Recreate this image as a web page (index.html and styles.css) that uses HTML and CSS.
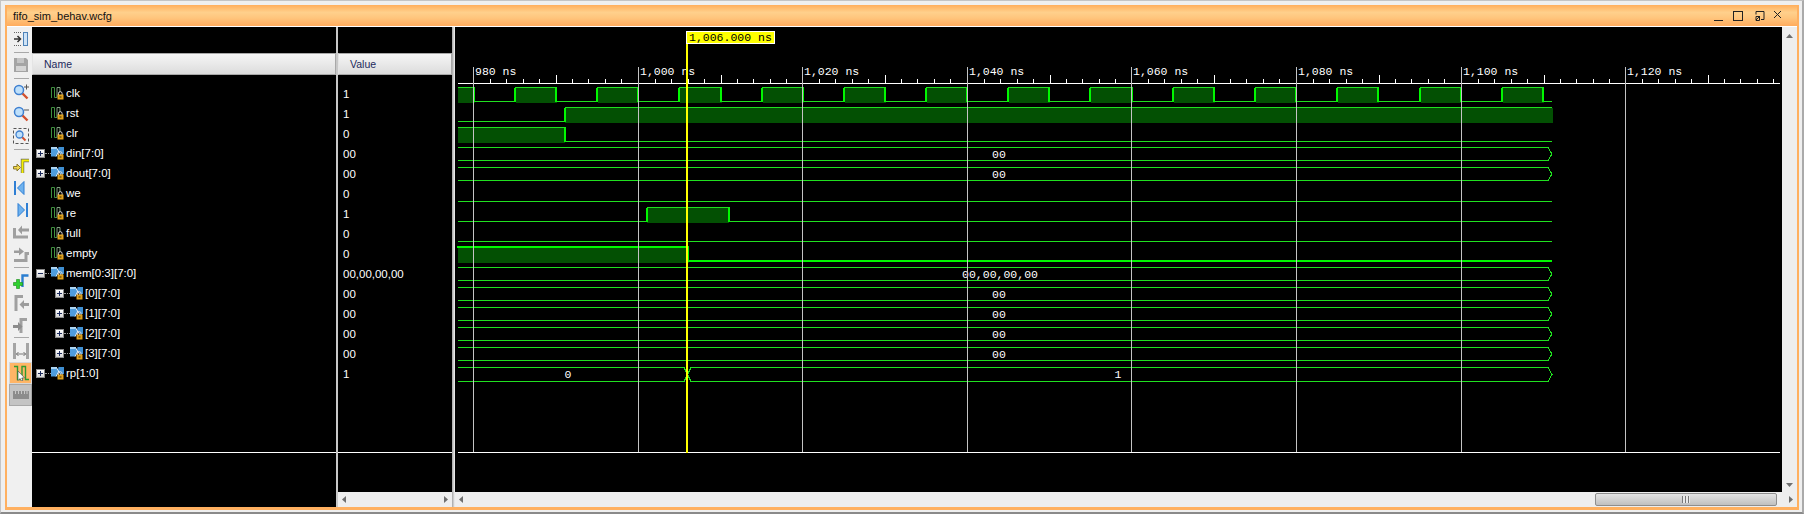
FILE: index.html
```html
<!DOCTYPE html>
<html lang="en">
<head>
  <meta charset="UTF-8">
  <title>fifo_sim_behav.wcfg</title>
  <link rel="stylesheet" href="styles.css">
</head>
<body>

  <svg class="icon-defs" width="0" height="0">
    <defs>
      <symbol id="i-step-in" viewBox="0 0 16 16">
        <path d="M1 1.500h8M1 14.500h8" stroke="#666" stroke-dasharray="1 1" fill="none"/>
        <path d="M1 8h6M4.500 5l3 3-3 3" stroke="#333" stroke-width="1.500" fill="none"/>
        <rect x="10.500" y="1.500" width="4" height="13" fill="#cfe3f6" stroke="#4f83b8"/>
      </symbol>
      <symbol id="i-save" viewBox="0 0 16 16">
        <path d="M1 1h12l2 2v12H1z" fill="#a4a4a4"/>
        <rect x="4" y="1" width="7" height="5" fill="#c4c4c4"/>
        <rect x="3" y="9" width="10" height="5" fill="#d4d4d4"/>
      </symbol>
      <symbol id="i-zoom-in" viewBox="0 0 16 16">
        <path d="M9 9l5.500 5.500" stroke="#d2502e" stroke-width="2.400"/>
        <circle cx="6" cy="6" r="4.500" fill="#bfe0fa" stroke="#3d7fd0" stroke-width="1.500"/>
        <path d="M11 3h5M13.500 .5v5" stroke="#555"/>
      </symbol>
      <symbol id="i-zoom-out" viewBox="0 0 16 16">
        <path d="M9 9l5.500 5.500" stroke="#d2502e" stroke-width="2.400"/>
        <circle cx="6" cy="6" r="4.500" fill="#bfe0fa" stroke="#3d7fd0" stroke-width="1.500"/>
        <path d="M11 4h5" stroke="#555"/>
      </symbol>
      <symbol id="i-zoom-fit" viewBox="0 0 16 16">
        <rect x=".5" y=".5" width="15" height="15" fill="none" stroke="#555" stroke-dasharray="3 2"/>
        <path d="M8.500 8.500l4 4" stroke="#d2502e" stroke-width="2"/>
        <circle cx="6.500" cy="6.500" r="3.500" fill="#bfe0fa" stroke="#3d7fd0" stroke-width="1.300"/>
      </symbol>
      <symbol id="i-goto" viewBox="0 0 16 16">
        <path d="M9.500 15V2.500H16" stroke="#666" stroke-width="3.400" fill="none"/>
        <path d="M9.500 15V2.500H16" stroke="#f6f000" stroke-width="2" fill="none"/>
        <path d="M.5 8.500h3.500V6l3.500 3.500L4 13v-2H.5z" fill="#f2d84a" stroke="#8a7a30"/>
      </symbol>
      <symbol id="i-prev" viewBox="0 0 16 16">
        <rect x="1" y="1" width="2" height="14" fill="#2f7fd4"/>
        <path d="M11 1.500v13L4.500 8z" fill="#6fb2ee" stroke="#2f7fd4"/>
      </symbol>
      <symbol id="i-next" viewBox="0 0 16 16">
        <rect x="13" y="1" width="2" height="14" fill="#2f7fd4"/>
        <path d="M5 1.500v13L11.500 8z" fill="#6fb2ee" stroke="#2f7fd4"/>
      </symbol>
      <symbol id="i-swap-left" viewBox="0 0 16 16">
        <path d="M1.500 4v9H15" stroke="#a0a0a0" stroke-width="3" fill="none"/>
        <path d="M16 7.500H9V10.500L5 6l4-4.500V4.500h7z" fill="#9c9c9c"/>
      </symbol>
      <symbol id="i-swap-right" viewBox="0 0 16 16">
        <path d="M1 14.500h12V7.500h3" stroke="#a0a0a0" stroke-width="3" fill="none"/>
        <path d="M1 4.500h5V1.500l5 4-5 4V7H1z" fill="#9c9c9c"/>
      </symbol>
      <symbol id="i-add" viewBox="0 0 16 16">
        <path d="M9.500 14V2.500H15.500" stroke="#2b7ed0" stroke-width="2.400" fill="none"/>
        <path d="M3.500 6.500h3v3h3v3h-3v3h-3v-3h-3v-3h3z" fill="#2fd02f" stroke="#158a15" stroke-width=".6"/>
      </symbol>
      <symbol id="i-marker-left" viewBox="0 0 16 16">
        <path d="M3 16V1.500h7" stroke="#a0a0a0" stroke-width="3" fill="none"/>
        <path d="M16 8H11V5L6.500 9.500 11 14v-3h5z" fill="#9c9c9c"/>
      </symbol>
      <symbol id="i-marker-right" viewBox="0 0 16 16">
        <path d="M8 16V2.500h6" stroke="#a0a0a0" stroke-width="3" fill="none"/>
        <path d="M0 8h5V5l4.500 4.500L5 14v-3H0z" fill="#8c8c8c"/>
      </symbol>
      <symbol id="i-measure" viewBox="0 0 16 16">
        <rect x="0" y="0" width="3" height="16" fill="#a4a4a4"/>
        <rect x="13" y="0" width="3" height="16" fill="#a4a4a4"/>
        <path d="M3 11h10M5.500 9l-2 2 2 2M10.500 9l2 2-2 2" stroke="#777" fill="none"/>
      </symbol>
      <symbol id="i-snap" viewBox="0 0 16 16">
        <path d="M1 1.500h3.500v13H9V1.500h3.500v13H16" stroke="#2f9a2f" stroke-width="1.400" fill="none"/>
        <path d="M5 6v9.500l2-2 1.500 2.500 1.500-.8L8.700 13l2.800-.2z" fill="#fff" stroke="#555" stroke-width=".7"/>
      </symbol>
      <symbol id="i-ruler" viewBox="0 0 16 16">
        <rect x="0" y="4" width="16" height="8" fill="#8c8c8c"/>
        <path d="M2.500 4v3M5.500 4v3M8.500 4v3M11.500 4v3M14 4v3" stroke="#c8c8c8"/>
      </symbol>

      <symbol id="i-signal" viewBox="0 0 13 14">
        <path d="M.5 12V1.500H3.500V11.500H6" stroke="#3f8f3f" fill="none"/>
        <path d="M6 11.500V1.500H9V6" stroke="#7fa07f" fill="none"/>
        <path d="M7.500 9V7.500a1.800 1.800 0 0 1 3.600 0V9" stroke="#dddddd" fill="none"/>
        <rect x="6.500" y="8.500" width="6" height="5" fill="#dfa21f"/>
        <rect x="8.500" y="10" width="2" height="2" fill="#8a6410"/>
      </symbol>
      <symbol id="i-bus" viewBox="0 0 13 14">
        <path d="M0 1h5.500L8 5.500 5.500 10.500H0z" fill="#4f9ddc"/>
        <path d="M0 1h5v2H0z" fill="#a9d4f4"/>
        <path d="M7.500 1H13V8H9.500L7 4.500z" fill="#3f8fd2"/>
        <path d="M5 1l5 8M5 10.500L8 5" stroke="#f0f8ff" stroke-width=".9"/>
        <path d="M7.500 9V7.500a1.800 1.800 0 0 1 3.600 0V9" stroke="#dddddd" fill="none"/>
        <rect x="6.500" y="8.500" width="6" height="5" fill="#dfa21f"/>
        <rect x="8.500" y="10" width="2" height="2" fill="#8a6410"/>
      </symbol>
    </defs>
  </svg>

  <div class="frame">
    <div class="window">

      <div class="titlebar">
        <span class="title-text">fifo_sim_behav.wcfg</span>
        <svg class="title-controls" width="68" height="12" viewBox="0 0 68 12">
          <path d="M0 10.500h9" stroke="#222"/>
          <rect x="19.500" y="1.500" width="9" height="9" fill="none" stroke="#222"/>
          <path d="M42 4.500V1.500h8v8h-3M42 10l4-4M42 6.500h3.500v4H42z" fill="none" stroke="#222"/>
          <path d="M60 1l7 7M67 1l-7 7" stroke="#222"/>
        </svg>
      </div>

      <div class="content">

        <div class="toolbar">
          <div class="tool-btn"><svg class="tool-icon"><use href="#i-step-in"/></svg></div>
          <div class="tool-sep tool-sep-first"></div>
          <div class="tool-btn"><svg class="tool-icon"><use href="#i-save"/></svg></div>
          <div class="tool-sep"></div>
          <div class="tool-btn"><svg class="tool-icon"><use href="#i-zoom-in"/></svg></div>
          <div class="tool-btn"><svg class="tool-icon"><use href="#i-zoom-out"/></svg></div>
          <div class="tool-btn"><svg class="tool-icon"><use href="#i-zoom-fit"/></svg></div>
          <div class="tool-sep tool-sep-wide"></div>
          <div class="tool-btn"><svg class="tool-icon"><use href="#i-goto"/></svg></div>
          <div class="tool-btn"><svg class="tool-icon"><use href="#i-prev"/></svg></div>
          <div class="tool-btn"><svg class="tool-icon"><use href="#i-next"/></svg></div>
          <div class="tool-btn"><svg class="tool-icon"><use href="#i-swap-left"/></svg></div>
          <div class="tool-btn"><svg class="tool-icon"><use href="#i-swap-right"/></svg></div>
          <div class="tool-sep"></div>
          <div class="tool-btn"><svg class="tool-icon"><use href="#i-add"/></svg></div>
          <div class="tool-btn"><svg class="tool-icon"><use href="#i-marker-left"/></svg></div>
          <div class="tool-btn"><svg class="tool-icon"><use href="#i-marker-right"/></svg></div>
          <div class="tool-sep tool-sep-last"></div>
          <div class="tool-btn"><svg class="tool-icon"><use href="#i-measure"/></svg></div>
          <div class="tool-btn tool-btn-active"><svg class="tool-icon"><use href="#i-snap"/></svg></div>
          <div class="tool-btn tool-btn-off"><svg class="tool-icon"><use href="#i-ruler"/></svg></div>
        </div>

        <div class="column name-column">
          <div class="column-top"></div>
          <div class="column-header">Name</div>
          <div class="rows">
            <div class="row"><svg class="sig-icon"><use href="#i-signal"/></svg><span>clk</span></div>
            <div class="row"><svg class="sig-icon"><use href="#i-signal"/></svg><span>rst</span></div>
            <div class="row"><svg class="sig-icon"><use href="#i-signal"/></svg><span>clr</span></div>
            <div class="row row-bus"><i class="expander"></i><i class="dots"></i><svg class="sig-icon"><use href="#i-bus"/></svg><span>din[7:0]</span></div>
            <div class="row row-bus"><i class="expander"></i><i class="dots"></i><svg class="sig-icon"><use href="#i-bus"/></svg><span>dout[7:0]</span></div>
            <div class="row"><svg class="sig-icon"><use href="#i-signal"/></svg><span>we</span></div>
            <div class="row"><svg class="sig-icon"><use href="#i-signal"/></svg><span>re</span></div>
            <div class="row"><svg class="sig-icon"><use href="#i-signal"/></svg><span>full</span></div>
            <div class="row"><svg class="sig-icon"><use href="#i-signal"/></svg><span>empty</span></div>
            <div class="row row-bus"><i class="expander expander-open"></i><i class="dots"></i><svg class="sig-icon"><use href="#i-bus"/></svg><span>mem[0:3][7:0]</span></div>
            <div class="row row-bus row-child"><i class="expander"></i><i class="dots"></i><svg class="sig-icon"><use href="#i-bus"/></svg><span>[0][7:0]</span></div>
            <div class="row row-bus row-child"><i class="expander"></i><i class="dots"></i><svg class="sig-icon"><use href="#i-bus"/></svg><span>[1][7:0]</span></div>
            <div class="row row-bus row-child"><i class="expander"></i><i class="dots"></i><svg class="sig-icon"><use href="#i-bus"/></svg><span>[2][7:0]</span></div>
            <div class="row row-bus row-child"><i class="expander"></i><i class="dots"></i><svg class="sig-icon"><use href="#i-bus"/></svg><span>[3][7:0]</span></div>
            <div class="row row-bus"><i class="expander"></i><i class="dots"></i><svg class="sig-icon"><use href="#i-bus"/></svg><span>rp[1:0]</span></div>
          </div>
          <div class="column-footer"></div>
        </div>

        <div class="divider"></div>

        <div class="column value-column">
          <div class="column-top"></div>
          <div class="column-header">Value</div>
          <div class="rows">
            <div class="row">1</div>
            <div class="row">1</div>
            <div class="row">0</div>
            <div class="row">00</div>
            <div class="row">00</div>
            <div class="row">0</div>
            <div class="row">1</div>
            <div class="row">0</div>
            <div class="row">0</div>
            <div class="row">00,00,00,00</div>
            <div class="row">00</div>
            <div class="row">00</div>
            <div class="row">00</div>
            <div class="row">00</div>
            <div class="row">1</div>
          </div>
          <div class="column-footer">
            <div class="hscroll">
              <i class="arrow arrow-left"></i>
              <i class="arrow arrow-right"></i>
            </div>
          </div>
        </div>

        <div class="divider divider-wide"></div>

        <div class="wave-pane">
          <div class="wave-main">
            <svg class="wave" width="1327" height="465" viewBox="455 27 1327 465" shape-rendering="crispEdges">
              <defs>
                <g id="decade">
                  <path class="tick" d="M17.500 79v4M33.500 79v4M50.500 79v4M66.500 79v4M83.500 75v8M99.500 79v4M115.500 79v4M132.500 79v4M148.500 79v4"/>
                  <path class="tick-major" d="M.5 67V452"/>
                </g>
                <path id="bus" d="M458 .5H1548L1552 7L1548 13.500H458"/>
              </defs>

              <!-- filled highs -->
              <path class="high-fill" d="M458 88H475V103H458ZM516 88H557V103H516ZM598 88H639V103H598ZM680 88H722V103H680ZM763 88H804V103H763ZM845 88H886V103H845ZM927 88H968V103H927ZM1009 88H1050V103H1009ZM1091 88H1133V103H1091ZM1174 88H1215V103H1174ZM1256 88H1297V103H1256ZM1338 88H1379V103H1338ZM1421 88H1462V103H1421ZM1503 88H1544V103H1503Z"/>
              <path class="high-fill" d="M565 108H1553V123H565ZM458 128H565V143H458ZM647 208H729V223H647ZM458 248H689V263H458Z"/>

              <!-- one bit signals -->
              <g class="line">
                <path d="M458 87.500H474V101.500H515V87.500H556V101.500H597V87.500H638V101.500H679V87.500H721V101.500H762V87.500H803V101.500H844V87.500H885V101.500H926V87.500H967V101.500H1008V87.500H1049V101.500H1090V87.500H1132V101.500H1173V87.500H1214V101.500H1255V87.500H1296V101.500H1337V87.500H1378V101.500H1420V87.500H1461V101.500H1502V87.500H1543V101.500H1552"/>
                <path d="M458 121.500H565V107.500H1552"/>
                <path d="M458 127.500H565V141.500H1552"/>
                <path d="M458 201.500H1552"/>
                <path d="M458 221.500H647V207.500H729V221.500H1552"/>
                <path d="M458 241.500H1552"/>
              </g>
              <g class="edge">
                <path d="M474 88V102M515 88V102M556 88V102M597 88V102M638 88V102M679 88V102M721 88V102M762 88V102M803 88V102M844 88V102M885 88V102M926 88V102M967 88V102M1008 88V102M1049 88V102M1090 88V102M1132 88V102M1173 88V102M1214 88V102M1255 88V102M1296 88V102M1337 88V102M1378 88V102M1420 88V102M1461 88V102M1502 88V102M1543 88V102"/>
                <path d="M565 108V122M565 128V142M647 208V222M729 208V222"/>
                <path d="M457 247H688V261H1552"/>
              </g>

              <!-- buses -->
              <g class="line">
                <use href="#bus" y="147"/>
                <use href="#bus" y="167"/>
                <use href="#bus" y="267"/>
                <use href="#bus" y="287"/>
                <use href="#bus" y="307"/>
                <use href="#bus" y="327"/>
                <use href="#bus" y="347"/>
                <path d="M458 367.500H684L691 381.500H1548L1552 374.500L1548 367.500H691L684 381.500H458"/>
              </g>
              <g class="bus-text">
                <text x="999" y="158">00</text>
                <text x="999" y="178">00</text>
                <text x="1000" y="278">00,00,00,00</text>
                <text x="999" y="298">00</text>
                <text x="999" y="318">00</text>
                <text x="999" y="338">00</text>
                <text x="999" y="358">00</text>
                <text x="568" y="378">0</text>
                <text x="1118" y="378">1</text>
              </g>

              <!-- time ruler -->
              <path class="tick" d="M458 83.500H1780"/>
              <use href="#decade" x="473"/>
              <use href="#decade" x="638"/>
              <use href="#decade" x="802"/>
              <use href="#decade" x="967"/>
              <use href="#decade" x="1131"/>
              <use href="#decade" x="1296"/>
              <use href="#decade" x="1461"/>
              <use href="#decade" x="1625"/>
              <g class="ruler-text">
                <text x="475" y="75">980 ns</text>
                <text x="640" y="75">1,000 ns</text>
                <text x="804" y="75">1,020 ns</text>
                <text x="969" y="75">1,040 ns</text>
                <text x="1133" y="75">1,060 ns</text>
                <text x="1298" y="75">1,080 ns</text>
                <text x="1463" y="75">1,100 ns</text>
                <text x="1627" y="75">1,120 ns</text>
              </g>
              <path class="tick" d="M458 452.500H1780"/>

              <!-- cursor -->
              <rect class="cursor" x="686" y="43" width="2" height="410"/>
              <rect class="cursor-tag" x="686.500" y="31.500" width="88" height="12"/>
              <text class="cursor-text" x="689" y="41">1,006.000 ns</text>
            </svg>
            <div class="vscroll">
              <i class="arrow arrow-up"></i>
              <i class="arrow arrow-down"></i>
            </div>
          </div>
          <div class="hscroll">
            <i class="arrow arrow-left"></i>
            <div class="hscroll-right">
              <div class="thumb"><i class="grip"></i></div>
              <i class="arrow arrow-right"></i>
            </div>
          </div>
        </div>

      </div>
    </div>
  </div>

</body>
</html>
```

FILE: styles.css
```css
html, body {
  margin: 0;
  height: 100%;
  overflow: hidden;
}

body {
  font-family: "Liberation Sans", Arial, sans-serif;
  font-size: 11.5px;
  background: #f0f0f0;
}

.icon-defs {
  position: absolute;
}

.frame {
  width: 1804px;
  height: 514px;
  box-sizing: border-box;
  padding: 4px 3px 2px 4px;
  background: #efefef;
  border-top: 1px solid #c4c4c4;
  border-left: 1px solid #c4c4c4;
  border-right: 2px solid #aaaaaa;
  border-bottom: 2px solid #8a8a8a;
}

.window {
  height: 100%;
  box-sizing: border-box;
  display: flex;
  flex-direction: column;
  border-left: 2px solid #ffb060;
  border-right: 2px solid #ffb060;
  border-bottom: 3px solid #ffb060;
}

.titlebar {
  height: 21px;
  flex: none;
  display: flex;
  align-items: center;
  justify-content: space-between;
  padding: 0 15px 0 6px;
  background: linear-gradient(#ffae5c 0%, #ffd08c 35%, #ffc67e 60%, #ffac5e 100%);
  border-bottom: 1px solid #ffffff;
}

.title-text {
  font-size: 11px;
  color: #111111;
}

.content {
  flex: 1;
  min-height: 0;
  display: flex;
  background: #000000;
}

/* left toolbar */
.toolbar {
  width: 25px;
  flex: none;
  box-sizing: border-box;
  padding-top: 1px;
  background: #f0f0f0;
  display: flex;
  flex-direction: column;
}

.tool-btn {
  width: 23px;
  height: 22px;
  flex: none;
  margin-left: 2px;
  box-sizing: border-box;
  padding: 3px 0 0 4px;
}

.tool-icon {
  display: block;
  width: 16px;
  height: 16px;
}

.tool-btn-active {
  background: #ffb566;
  border: 1px solid #d8d8d8;
  padding: 2px 0 0 3px;
}

.tool-btn-off {
  background: #c4c4c4;
  border: 1px solid #a8a8a8;
  padding: 2px 0 0 3px;
}

.tool-sep {
  height: 1px;
  flex: none;
  width: 15px;
  margin: 2px 0 2px 7px;
  background: #a8a8a8;
}

.tool-sep-first {
  margin-bottom: 1px;
}

.tool-sep-wide {
  margin-bottom: 5px;
}

.tool-sep-last {
  margin-top: 1px;
}

/* name and value columns */
.column {
  flex: none;
  display: flex;
  flex-direction: column;
  background: #000000;
  color: #ffffff;
}

.name-column {
  width: 304px;
}

.value-column {
  width: 114px;
}

.column-top {
  height: 26px;
  flex: none;
}

.column-header {
  height: 22px;
  flex: none;
  box-sizing: border-box;
  margin-bottom: 8px;
  padding-left: 11px;
  line-height: 21px;
  font-size: 10.500px;
  color: #1c2a5c;
  background: linear-gradient(#f6f6f6, #dcdcdc);
  border: 1px solid #a8a8a8;
  border-left-color: #e4e4e4;
}

.rows {
  flex: 1;
}

.row {
  height: 20px;
  display: flex;
  align-items: center;
  padding-left: 19px;
}

.value-column .row {
  box-sizing: border-box;
  padding: 2px 0 0 5px;
}

.row-bus {
  padding-left: 4px;
}

.row-child {
  padding-left: 23px;
}

.sig-icon {
  width: 13px;
  height: 14px;
  flex: none;
  margin-right: 2px;
}

.expander {
  position: relative;
  width: 9px;
  height: 9px;
  flex: none;
  box-sizing: border-box;
  border: 1px solid #8a8a8a;
  background: linear-gradient(#ffffff, #d4d4d4);
}

.expander::before {
  content: "";
  position: absolute;
  left: 1px;
  top: 3px;
  width: 5px;
  height: 1px;
  background: #1c2a5c;
}

.expander::after {
  content: "";
  position: absolute;
  left: 3px;
  top: 1px;
  width: 1px;
  height: 5px;
  background: #1c2a5c;
}

.expander-open::after {
  display: none;
}

.dots {
  width: 6px;
  flex: none;
  border-top: 1px dotted #9a9a9a;
}

.column-footer {
  height: 55px;
  flex: none;
  box-sizing: border-box;
  border-top: 1px solid #ffffff;
  display: flex;
  flex-direction: column;
  justify-content: flex-end;
}

.divider {
  width: 2px;
  flex: none;
  background: #c8c8c8;
}

.divider-wide {
  width: 3px;
  background: linear-gradient(90deg, #a4a4a4, #f4f4f4);
}

/* waveform */
.wave-pane {
  flex: 1;
  min-width: 0;
  display: flex;
  flex-direction: column;
}

.wave-main {
  flex: 1;
  min-height: 0;
  display: flex;
}

.wave {
  display: block;
  flex: none;
  background: #000000;
}

.high-fill {
  fill: #035003;
}

.line path, .line use {
  fill: none;
  stroke: #20e020;
}

.edge path {
  fill: none;
  stroke: #00f800;
  stroke-width: 2;
}

.tick {
  fill: none;
  stroke: #ffffff;
}

.tick-major {
  fill: none;
  stroke: #c4c4c4;
}

.ruler-text text, .bus-text text, .cursor-text {
  font-family: "Liberation Mono", monospace;
  font-size: 11.500px;
}

.ruler-text text, .bus-text text {
  fill: #ffffff;
}

.bus-text text {
  text-anchor: middle;
}

.cursor {
  fill: #ffff00;
}

.cursor-tag {
  fill: #ffff00;
  stroke: #ffffff;
}

.cursor-text {
  fill: #000000;
}

/* scrollbars */
.vscroll {
  flex: 1;
  display: flex;
  flex-direction: column;
  align-items: center;
  justify-content: space-between;
  padding: 7px 0 5px;
  background: #eeeeee;
}

.hscroll {
  height: 15px;
  flex: none;
  display: flex;
  align-items: center;
  justify-content: space-between;
  padding: 0 4px 0 4px;
  background: #eeeeee;
}

.hscroll-right {
  display: flex;
  align-items: center;
}

.thumb {
  width: 182px;
  height: 13px;
  box-sizing: border-box;
  margin-right: 12px;
  display: flex;
  align-items: center;
  justify-content: center;
  border: 1px solid #8e8e8e;
  border-radius: 2px;
  background: linear-gradient(#e4e4e4, #c0c0c0);
}

.grip {
  width: 8px;
  height: 7px;
  background: repeating-linear-gradient(90deg, #777777 0 1px, #e8e8e8 1px 3px);
}

.arrow {
  display: block;
  flex: none;
  background: #6e6e6e;
}

.arrow-left, .arrow-right {
  width: 4px;
  height: 7px;
}

.arrow-left {
  clip-path: polygon(100% 0, 100% 100%, 0 50%);
}

.arrow-right {
  clip-path: polygon(0 0, 100% 50%, 0 100%);
}

.arrow-up, .arrow-down {
  width: 7px;
  height: 4px;
}

.arrow-up {
  clip-path: polygon(50% 0, 100% 100%, 0 100%);
}

.arrow-down {
  clip-path: polygon(0 0, 100% 0, 50% 100%);
}
```
